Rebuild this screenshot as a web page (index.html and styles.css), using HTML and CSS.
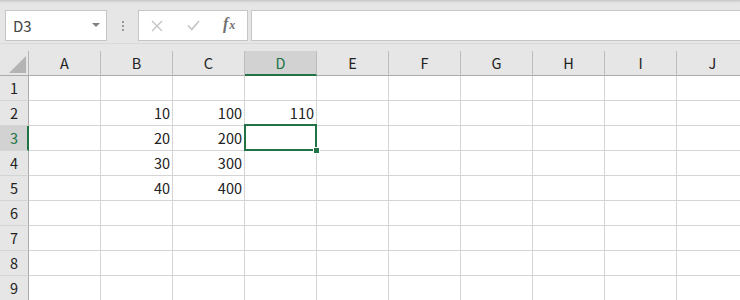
FILE: index.html
```html
<!DOCTYPE html>
<html lang="ja">

<head>
  <meta charset="UTF-8" />
  <title>Book1 - Excel</title>
  <link rel="stylesheet" href="styles.css">
</head>

<body>
  <div class="formula-bar">
    <div class="name-box">
      <span class="name-text">D3</span>
      <span class="name-arrow"></span>
    </div>
    <div class="grip"><i></i><i></i><i></i></div>
    <div class="fx-buttons">
      <svg class="btn-icon" width="12" height="12" viewBox="0 0 12 12">
        <path d="M1 1 L11 11 M11 1 L1 11" stroke="#c4c4c4" stroke-width="1.4" fill="none" />
      </svg>
      <svg class="btn-icon" width="13" height="11" viewBox="0 0 13 11">
        <path d="M1 5.5 L4.8 9.5 L12 1" stroke="#c4c4c4" stroke-width="1.6" fill="none" />
      </svg>
      <span class="fx"><i>f</i><i class="x">x</i></span>
    </div>
    <div class="formula-input"></div>
  </div>

  <div class="sheet">
    <div class="corner"><span class="corner-tri"></span></div>
    <div class="col-head">A</div>
    <div class="col-head">B</div>
    <div class="col-head">C</div>
    <div class="col-head active">D</div>
    <div class="col-head">E</div>
    <div class="col-head">F</div>
    <div class="col-head">G</div>
    <div class="col-head">H</div>
    <div class="col-head">I</div>
    <div class="col-head">J</div>
  </div>

  <script>
    // cell values by row, columns A..J
    const data = {
      2: { B: 10, C: 100, D: 110 },
      3: { B: 20, C: 200 },
      4: { B: 30, C: 300 },
      5: { B: 40, C: 400 }
    };
    const cols = ["A", "B", "C", "D", "E", "F", "G", "H", "I", "J"];
    const sheet = document.querySelector(".sheet");

    for (let r = 1; r <= 9; r++) {
      const head = document.createElement("div");
      head.className = "row-head" + (r === 3 ? " active" : "");
      head.textContent = r;
      sheet.appendChild(head);

      cols.forEach(c => {
        const cell = document.createElement("div");
        cell.className = "cell";
        const row = data[r] || {};
        if (row[c] !== undefined) cell.textContent = row[c];
        if (r === 3 && c === "D") {
          cell.classList.add("selected");
          const handle = document.createElement("span");
          handle.className = "fill-handle";
          cell.appendChild(handle);
        }
        sheet.appendChild(cell);
      });
    }
  </script>
</body>

</html>
```

FILE: styles.css
```css
body {
  margin: 0;
  width: 740px;
  height: 300px;
  overflow: hidden;
  background-color: #e6e6e6;
  font-family: "Noto Sans CJK JP", "Noto Sans", sans-serif;
  color: #222;
}

.formula-bar {
  display: flex;
  align-items: flex-start;
  height: 44px;
  padding-top: 10px;
  padding-left: 5px;
  box-sizing: border-box;
  background: linear-gradient(#c9c9c9, #e4e4e4 3px, #e6e6e6 6px);
  border-bottom: 1px solid #dadada;
  margin-bottom: 7px;
}

.name-box {
  width: 102px;
  height: 31px;
  box-sizing: border-box;
  background-color: #fff;
  border: 1px solid #c6c6c6;
  display: flex;
  align-items: center;
  justify-content: space-between;
  padding: 0 6px 0 7px;
}

.name-text {
  font-size: 15px;
  color: #444;
}

.name-arrow {
  width: 0;
  height: 0;
  border-left: 4px solid transparent;
  border-right: 4px solid transparent;
  border-top: 4px solid #808080;
  margin-top: -1px;
}

.grip {
  width: 31px;
  height: 31px;
  display: flex;
  flex-direction: column;
  align-items: center;
  justify-content: center;
  gap: 2px;
}

.grip i {
  display: block;
  width: 2px;
  height: 2px;
  background-color: #9a9a9a;
}

.fx-buttons {
  width: 110px;
  height: 31px;
  box-sizing: border-box;
  background-color: #fff;
  border: 1px solid #c6c6c6;
  display: flex;
  align-items: center;
  padding-left: 12px;
}

.btn-icon {
  margin-right: 24px;
}

.fx {
  font-family: "Liberation Serif", serif;
  font-size: 16px;
  font-weight: bold;
  color: #707070;
  margin-left: -1px;
  margin-top: -3px;
}

.fx .x {
  font-size: 12px;
  margin-left: 1px;
}

.formula-input {
  flex: 1;
  height: 31px;
  box-sizing: border-box;
  margin-left: 3px;
  background-color: #fff;
  border: 1px solid #c6c6c6;
  border-right: none;
}

.sheet {
  display: grid;
  grid-template-columns: 29px repeat(10, 72px);
  grid-template-rows: repeat(10, 25px);
  font-size: 14.5px;
}

.corner,
.col-head,
.row-head {
  background-color: #e6e6e6;
  box-sizing: border-box;
}

.corner {
  border-right: 1px solid #b5b5b5;
  border-bottom: 1px solid #ababab;
  position: relative;
}

.corner-tri {
  position: absolute;
  right: 2px;
  bottom: 2px;
  width: 0;
  height: 0;
  border-left: 17px solid transparent;
  border-bottom: 17px solid #b4b4b4;
}

.col-head {
  border-right: 1px solid #bdbdbd;
  border-bottom: 1px solid #ababab;
  text-align: center;
  line-height: 24px;
}

.col-head.active {
  background-color: #d2d2d2;
  color: #217346;
  border-bottom: 2px solid #217346;
  line-height: 23px;
}

.row-head {
  border-right: 1px solid #ababab;
  border-bottom: 1px solid #d4d4d4;
  text-align: center;
  line-height: 24px;
}

.row-head.active {
  background-color: #d2d2d2;
  color: #217346;
  border-right: 2px solid #217346;
  padding-left: 1px;
}

.cell {
  background-color: #fff;
  box-sizing: border-box;
  border-right: 1px solid #d4d4d4;
  border-bottom: 1px solid #d4d4d4;
  text-align: right;
  padding-right: 2px;
  line-height: 24px;
  position: relative;
}

.cell.selected::after {
  content: "";
  position: absolute;
  top: -2px;
  left: -1px;
  right: -1px;
  bottom: -1px;
  border: 2px solid #217346;
}

.fill-handle {
  position: absolute;
  right: -4px;
  bottom: -4px;
  width: 5px;
  height: 5px;
  background-color: #217346;
  border: 1px solid #fff;
  z-index: 1;
}
```
